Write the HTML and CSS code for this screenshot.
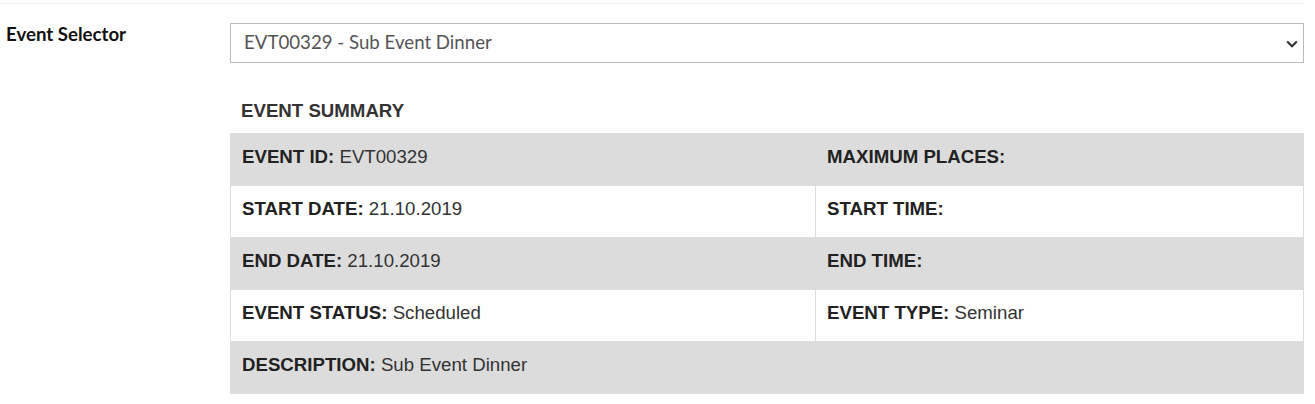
FILE: index.html
```html
<!DOCTYPE html>
<html lang="en">
<head>
    <meta charset="UTF-8">
    <meta name="viewport" content="width=device-width, initial-scale=1.0">
    <title>Event Selector</title>
    <link rel="stylesheet" href="styles.css">
</head>
<body>
    <div class="topline"></div>

    <div class="form-row">
        <label class="field-label" for="eventSelect">Event Selector</label>
        <div class="select-wrap">
            <select id="eventSelect" class="event-select">
                <option>EVT00329 - Sub Event Dinner</option>
            </select>
            <svg class="chevron" width="12" height="8" viewBox="0 0 12 8">
                <path d="M1.2 1.5 L6 6.2 L10.8 1.5" fill="none" stroke="#333" stroke-width="2.2"/>
            </svg>
        </div>
    </div>

    <div class="summary">
        <h3 class="summary-title">EVENT SUMMARY</h3>
        <table class="summary-table">
            <tr>
                <td class="col-left"><strong>EVENT ID:</strong> EVT00329</td>
                <td><strong>MAXIMUM PLACES:</strong></td>
            </tr>
            <tr>
                <td class="col-left"><strong>START DATE:</strong> 21.10.2019</td>
                <td><strong>START TIME:</strong></td>
            </tr>
            <tr>
                <td class="col-left"><strong>END DATE:</strong> 21.10.2019</td>
                <td><strong>END TIME:</strong></td>
            </tr>
            <tr>
                <td class="col-left"><strong>EVENT STATUS:</strong> Scheduled</td>
                <td><strong>EVENT TYPE:</strong> Seminar</td>
            </tr>
            <tr>
                <td colspan="2"><strong>DESCRIPTION:</strong> Sub Event Dinner</td>
            </tr>
        </table>
    </div>
</body>
</html>
```

FILE: styles.css
```css
body {
    margin: 0;
    font-family: Lato, "Liberation Sans", Arial, sans-serif;
    color: #222;
    background: #fff;
}
.topline {
    margin-top: 3px;
    width: 1304px;
    border-top: 1px solid #eee;
}
.form-row {
    display: flex;
    margin-top: 19px;
}
.field-label {
    width: 224px;
    padding-left: 6px;
    font-size: 18.67px;
    font-weight: bold;
    color: #111;
}
.select-wrap {
    position: relative;
    width: 1074px;
}
.event-select {
    appearance: none;
    -webkit-appearance: none;
    width: 100%;
    height: 40px;
    border: 1px solid #bbb;
    border-radius: 0;
    background: #fff;
    padding: 0 30px 2px 13px;
    font-family: Lato, sans-serif;
    font-size: 18.67px;
    color: #555;
}
.chevron {
    position: absolute;
    right: 6px;
    top: 17px;
}
.summary {
    margin-left: 230px;
    width: 1074px;
}
.summary-title {
    margin: 37px 0 0 11px;
    height: 33px;
    font-family: "Liberation Sans", Arial, sans-serif;
    font-size: 18.67px;
    font-weight: bold;
    color: #333;
}
.summary-table {
    width: 100%;
    border-collapse: collapse;
    font-family: "Liberation Sans", Arial, sans-serif;
    font-size: 18.67px;
    color: #333;
}
.summary-table td {
    height: 52px;
    padding: 0 11px 6px;
    border: 1px solid #dcdcdc;
    vertical-align: middle;
    box-sizing: border-box;
}
.summary-table tr:nth-child(odd) td {
    background: #dcdcdc;
}
.summary-table .col-left {
    width: 585px;
}
.summary-table strong {
    color: #222;
}
```
